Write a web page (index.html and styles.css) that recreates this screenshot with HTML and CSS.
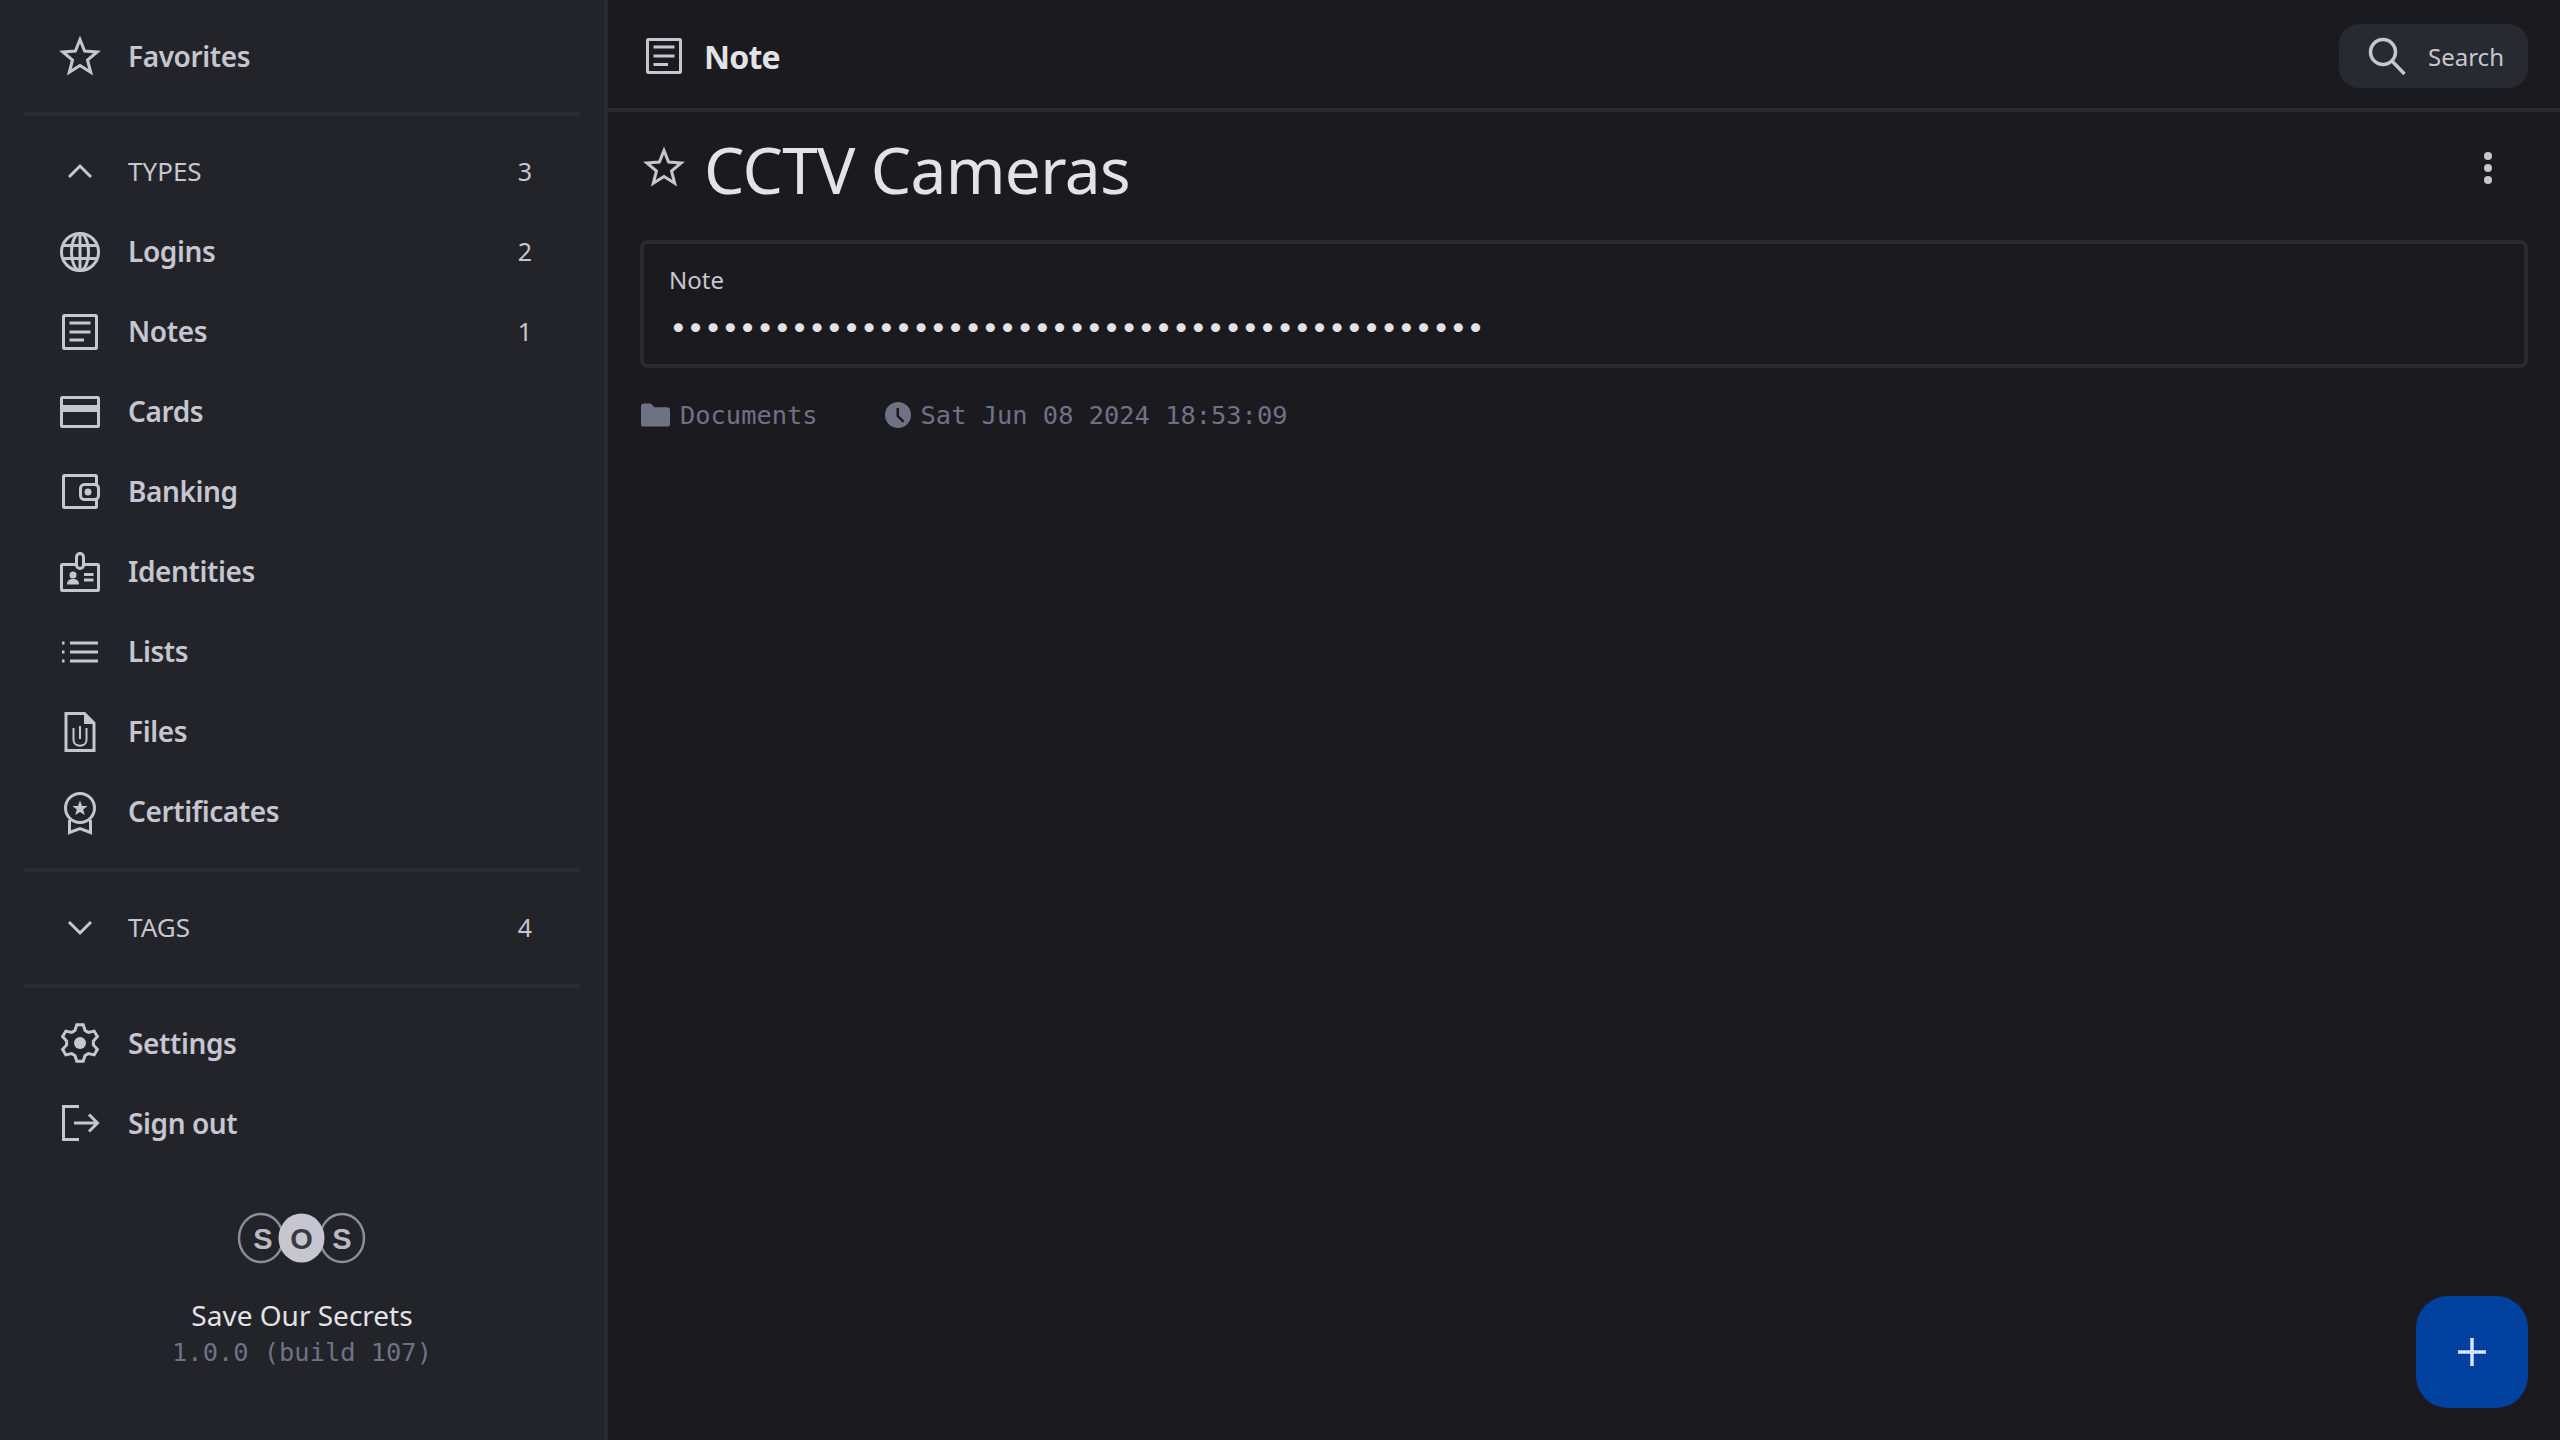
FILE: index.html
```html
<!DOCTYPE html>
<html lang="en">
<head>
<meta charset="utf-8">
<title>Save Our Secrets</title>
<link rel="stylesheet" href="styles.css">
</head>
<body>
<div class="app">
  <aside class="sidebar">
    <a class="row first"><svg class="icon" viewBox="0 0 40 40"><path class="star-line" d="M20 3.500 24.600 15.100 37.100 15.900 27.500 24 30.700 36.300 20 29.500 9.300 36.300 12.500 24 2.900 15.900 15.400 15.100Z"/></svg><span class="label">Favorites</span></a>
    <div class="divider"></div>
    <div class="row section"><svg class="icon" viewBox="0 0 40 40"><path d="M9 26 20 15 31 26"/></svg><span class="label caps">TYPES</span><span class="count">3</span></div>
    <a class="row"><svg class="icon" viewBox="0 0 40 40"><circle cx="20" cy="21" r="18.500"/><ellipse cx="20" cy="21" rx="8.500" ry="18.500"/><path d="M20 3V39M3.500 14.500H36.500M3.500 27.500H36.500"/></svg><span class="label">Logins</span><span class="count">2</span></a>
    <a class="row"><svg class="icon" viewBox="0 0 40 40"><rect x="3.500" y="4.500" width="33" height="33" rx="1"/><path d="M9.500 12H30.500M9.500 21H30.500M9.500 29H24"/></svg><span class="label">Notes</span><span class="count">1</span></a>
    <a class="row"><svg class="icon" viewBox="0 0 40 40"><rect x="1.500" y="6.500" width="37" height="29" rx="1"/><path class="band" d="M2 17.500H38"/></svg><span class="label">Cards</span></a>
    <a class="row"><svg class="icon" viewBox="0 0 40 40"><rect x="3.500" y="4.500" width="33" height="32" rx="1"/><rect class="knock" x="20.500" y="13.500" width="18" height="15" rx="4"/><circle class="solid" cx="28" cy="21" r="3.500"/></svg><span class="label">Banking</span></a>
    <a class="row"><svg class="icon" viewBox="0 0 40 40"><rect x="1.500" y="13.500" width="37" height="26" rx="1"/><rect class="knock" x="16.500" y="2.500" width="7" height="15" rx="3.500"/><circle class="solid" cx="13" cy="24" r="3.500"/><path class="solid" d="M7 33.500C7 29.500 9.500 28 13 28S19 29.500 19 33.500Z"/><path d="M24 23.500H33.500M24 29H33.500"/></svg><span class="label">Identities</span></a>
    <a class="row"><svg class="icon" viewBox="0 0 40 40"><path d="M10 12H38M10 21H38M10 30H38"/><path class="thin" d="M2 12H4.500M2 21H4.500M2 30H4.500"/></svg><span class="label">Lists</span></a>
    <a class="row"><svg class="icon" viewBox="0 0 40 40"><path d="M6 2.500H24.500L34 12V39.500H6Z"/><path class="solid" d="M24 2.500 34.500 13H24Z"/><path class="clip" d="M13.500 17V29C13.500 36.500 26.500 36.500 26.500 29V17M20 15V28"/></svg><span class="label">Files</span></a>
    <a class="row"><svg class="icon" viewBox="0 0 40 40"><circle cx="20" cy="17" r="14.500"/><path class="solid" d="M20 9.500 22 14.900 27.500 15.100 23.200 18.600 24.700 24 20 20.900 15.300 24 16.800 18.600 12.500 15.100 18 14.900Z"/><path d="M9.500 29V41.500L20 37.500 30.500 41.500V29"/></svg><span class="label">Certificates</span></a>
    <div class="divider lower"></div>
    <div class="row section"><svg class="icon" viewBox="0 0 40 40"><path d="M9 15 20 26 31 15"/></svg><span class="label caps">TAGS</span><span class="count">4</span></div>
    <div class="divider lower"></div>
    <a class="row"><svg class="icon" viewBox="0 0 40 40"><path d="M14.940 7.480 16.790 1.780H23.210L25.060 7.480 28.310 9.360 34.170 8.110 37.380 13.670 33.370 18.120V21.880L37.380 26.330 34.170 31.890 28.310 30.640 25.060 32.520 23.210 38.220H16.790L14.940 32.520 11.690 30.640 5.830 31.890 2.620 26.330 6.630 21.880V18.120L2.620 13.670 5.830 8.110 11.690 9.360Z"/><circle class="solid" cx="20" cy="20" r="6"/></svg><span class="label">Settings</span></a>
    <a class="row"><svg class="icon" viewBox="0 0 40 40"><path d="M19 3.500H3.500V36.500H19M14 20H37M29 11.500 37.500 20 29 28.500"/></svg><span class="label">Sign out</span></a>
    <div class="brand">
      <svg class="logo" viewBox="0 0 128 50">
        <ellipse class="ring" cx="23" cy="25" rx="22" ry="24"/>
        <ellipse class="ring" cx="104" cy="25" rx="22" ry="24"/>
        <ellipse class="disc" cx="63.500" cy="25" rx="23" ry="24.500"/>
        <text class="logo-text" x="25" y="35.500">S</text>
        <text class="logo-text dark" x="63.500" y="35.500">O</text>
        <text class="logo-text" x="104" y="35.500">S</text>
      </svg>
      <div class="brand-name">Save Our Secrets</div>
      <div class="brand-version">1.0.0 (build 107)</div>
    </div>
  </aside>
  <main class="main">
    <header class="topbar">
      <svg class="icon" viewBox="0 0 40 40"><rect x="3.500" y="3.500" width="33" height="33" rx="1"/><path d="M9.500 11H30.500M9.500 20H30.500M9.500 28.500H24"/></svg>
      <span class="page-title">Note</span>
      <button class="search"><svg class="icon bold" viewBox="0 0 40 40"><circle cx="16" cy="16" r="12.500"/><path d="M25 25 37.500 38"/></svg><span>Search</span></button>
    </header>
    <section class="content">
      <div class="title-row">
        <svg class="icon star" viewBox="0 0 40 40"><path d="M20 3.500 24.600 15.100 37.100 15.900 27.500 24 30.700 36.300 20 29.500 9.300 36.300 12.500 24 2.900 15.900 15.400 15.100Z"/></svg>
        <h1 class="title">CCTV Cameras</h1>
        <svg class="menu" viewBox="0 0 8 32"><circle cx="4" cy="4" r="4"/><circle cx="4" cy="16" r="4"/><circle cx="4" cy="28" r="4"/></svg>
      </div>
      <div class="field">
        <div class="field-label">Note</div>
        <div class="field-value">•••••••••••••••••••••••••••••••••••••••••••••••</div>
      </div>
      <div class="meta">
        <span class="meta-item"><svg class="meta-icon" viewBox="0 0 30 24"><path d="M0 3C0 1 1 0 3 0H10L14 4H27C29 4 30 5 30 7V21C30 23 29 24 27 24H3C1 24 0 23 0 21Z"/></svg><span>Documents</span></span>
        <span class="meta-item"><svg class="meta-icon clock" viewBox="0 0 26 26"><path fill-rule="evenodd" d="M13 0A13 13 0 1 0 13 26 13 13 0 0 0 13 0ZM11.500 6H14V13.500L19.500 19 17.800 20.700 11.500 14.500Z"/></svg><span>Sat Jun 08 2024 18:53:09</span></span>
      </div>
    </section>
    <button class="fab"><svg class="fab-icon" viewBox="0 0 28 28"><path d="M14 0V28M0 14H28"/></svg></button>
  </main>
</div>
</body>
</html>
```
FILE: styles.css
```css
* { box-sizing: border-box; }
html, body { margin: 0; height: 100%; }
body {
  background: #1b1b1f;
  color: #c6c6d0;
  font-family: "Noto Sans", sans-serif;
  overflow: hidden;
}
.app { display: flex; height: 1440px; }
.sidebar {
  width: 608px;
  flex: none;
  background: #232429;
  border-right: 4px solid #282b32;
  padding-top: 16px;
  display: flex;
  flex-direction: column;
}
.row {
  height: 80px;
  flex: none;
  display: flex;
  align-items: center;
  gap: 28px;
  padding: 0 72px 0 60px;
}
.icon {
  width: 40px;
  height: 40px;
  flex: none;
  fill: none;
  stroke: #c6c6d0;
  stroke-width: 3;
  overflow: visible;
}
.icon.bold { stroke-width: 3.500; }
.icon .solid { fill: #c6c6d0; stroke: none; }
.icon .knock { fill: #232429; }
.icon .band { stroke-width: 7; }
.icon .clip { stroke-width: 2; }
.label {
  font-size: 28px;
  font-weight: 600;
  letter-spacing: -0.4px;
  flex: 1;
}
.caps { font-size: 26px; font-weight: 400; letter-spacing: 0; }
.count { font-size: 25px; }
.divider {
  height: 4px;
  margin: 16px 24px 15px;
  background: #2b2d36;
  flex: none;
}
.divider.lower { margin-top: 17px; }
.brand {
  margin-top: 50px;
  display: flex;
  flex-direction: column;
  align-items: center;
}
.logo { width: 128px; height: 50px; overflow: visible; }
.ring { fill: none; stroke: #8d8e99; stroke-width: 2.500; }
.disc { fill: #c6c6d0; }
.logo-text {
  font-family: "Liberation Sans", sans-serif;
  font-size: 29px;
  font-weight: 700;
  text-anchor: middle;
  fill: #b9b9c4;
}
.logo-text.dark { fill: #3a3b42; }
.brand-name {
  margin-top: 34px;
  color: #e3e2e6;
  font-size: 28px;
  line-height: 36px;
}
.brand-version {
  margin-top: 2px;
  color: #6f7285;
  font-family: "DejaVu Sans Mono", monospace;
  font-size: 25.400px;
  line-height: 34px;
}
.main { flex: 1; position: relative; min-width: 0; }
.topbar {
  height: 112px;
  border-bottom: 4px solid #282b32;
  display: flex;
  align-items: center;
  padding: 4px 32px 0 36px;
  gap: 20px;
}
.page-title {
  font-size: 32px;
  font-weight: 700;
  letter-spacing: -0.8px;
  color: #e3e2e6;
  flex: 1;
}
.search {
  height: 64px;
  width: 189px;
  border: 0;
  border-radius: 20px;
  background: #282a31;
  color: #c6c6d0;
  font: 400 24px "Noto Sans", sans-serif;
  display: flex;
  align-items: center;
  gap: 21px;
  padding: 0 0 0 28px;
}
.content { padding: 0 32px; }
.title-row {
  height: 116px;
  margin-bottom: 12px;
  display: flex;
  align-items: center;
  gap: 20px;
  padding-left: 4px;
}
.star { margin-bottom: 6px; }
.title {
  margin: 0 0 2px;
  flex: 1;
  font-size: 64px;
  font-weight: 400;
  letter-spacing: -0.7px;
  color: #e3e2e6;
}
.menu { width: 8px; height: 32px; fill: #c6c6d0; margin: 0 36px 4px 0; }
.field {
  height: 128px;
  border: 4px solid #282b32;
  border-radius: 8px;
  padding: 20px 25px 0;
}
.field-label {
  font-size: 24px;
  line-height: 32px;
  color: #c6c6d0;
}
.field-value {
  margin-top: 12px;
  font-family: "DejaVu Sans Mono", monospace;
  font-size: 31px;
  letter-spacing: -1.330px;
  line-height: 40px;
  color: #e3e2e6;
}
.meta {
  margin-top: 24px;
  height: 46px;
  padding-left: 1px;
  display: flex;
  align-items: center;
  gap: 67px;
  color: #6f7285;
  font-family: "DejaVu Sans Mono", monospace;
  font-size: 25.400px;
}
.meta-item { display: flex; align-items: center; gap: 10px; }
.meta-icon { width: 29px; height: 24px; fill: #6f7285; flex: none; }
.meta-icon.clock { width: 26px; height: 26px; }
.fab {
  position: absolute;
  right: 32px;
  bottom: 32px;
  width: 112px;
  height: 112px;
  border: 0;
  border-radius: 32px;
  background: #0041a0;
  display: flex;
  align-items: center;
  justify-content: center;
  padding: 0;
}
.fab-icon { width: 28px; height: 28px; fill: none; stroke: #dae2ff; stroke-width: 3.500; }
```
